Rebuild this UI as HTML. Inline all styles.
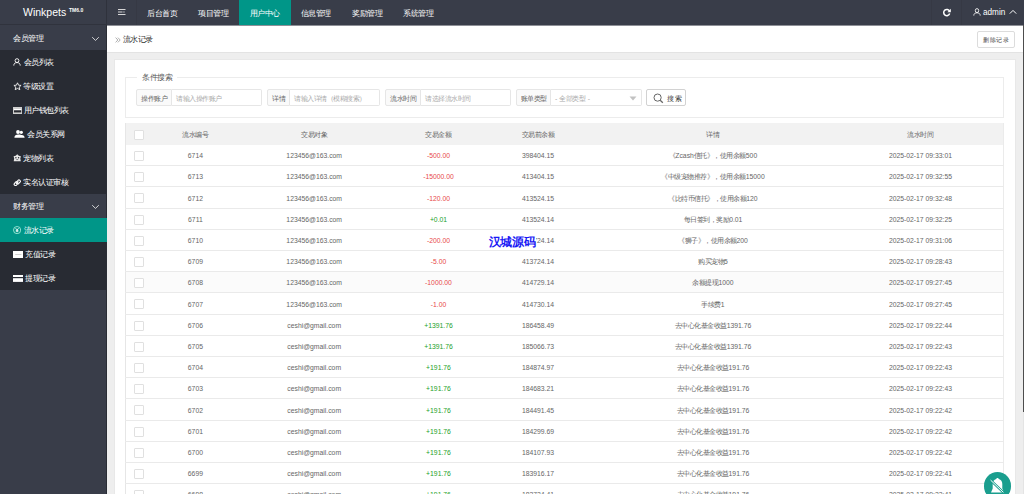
<!DOCTYPE html><html><head><meta charset="utf-8"><style>
*{margin:0;padding:0;box-sizing:border-box}
html,body{width:1024px;height:494px;overflow:hidden;background:#eeeeee;font-family:"Liberation Sans",sans-serif}
.a{position:absolute}
.nw{white-space:nowrap}
#hdr{left:0;top:0;width:1024px;height:25px;background:#393D49}
.navt{color:#fff;font-size:8px;line-height:25px;top:0.7px;letter-spacing:-0.5px}
#side{left:0;top:25px;width:106px;height:469px;background:#393D49}
.sub{background:#282B33}
.st{color:#fff;font-size:8px;letter-spacing:-0.5px;line-height:24px;margin-top:1.2px}
.c{}
.tb{font-size:6.8px;color:#666;text-align:center;white-space:nowrap}
.tb .c{font-size:7px;letter-spacing:-0.5px}
.cb{position:absolute;width:10px;height:10px;border:1px solid #e0e0e0;background:#fff;border-radius:1px}
.lbl{position:absolute;height:17px;background:#fafafa;border:1px solid #e6e6e6;border-radius:2px 0 0 2px;font-size:7px;line-height:18px;color:#666;text-align:center;letter-spacing:-0.5px}
.inp{position:absolute;height:17px;background:#fff;border:1px solid #e6e6e6;border-left:none;border-radius:0 2px 2px 0;font-size:7px;line-height:18px;color:#aaa;letter-spacing:-0.5px;white-space:nowrap}
.hl{position:absolute;height:1px;background:#eaeaea}
</style></head><body>
<div class="a" id="hdr">
<div class="a nw" style="left:23px;top:2px;font-size:10.5px;line-height:21px;color:#fff">Winkpets</div>
<div class="a nw" style="left:69px;top:6px;font-size:5px;line-height:8px;color:#fff;font-weight:bold">TM6.0</div>
<div class="a" style="left:106px;top:0;width:1px;height:25px;background:#2f323c"></div>
<div class="a" style="left:136px;top:0;width:1px;height:25px;background:#363944"></div>
<svg class="a" style="left:117px;top:8px" width="10" height="9" viewBox="0 0 10 9"><path d="M1 1.5H8.5M1 4H5.5M1 6.5H8.5" stroke="#e8e8e8" stroke-width="0.9"/><path d="M6.6 3L7.9 4L6.6 5Z" fill="#ddd"/></svg>
<div class="a" style="left:239px;top:0;width:52px;height:25px;background:#009688"></div>
<div class="a nw navt" style="left:147px">后台首页</div>
<div class="a nw navt" style="left:198px">项目管理</div>
<div class="a nw navt" style="left:249.8px">用户中心</div>
<div class="a nw navt" style="left:300.9px">信息管理</div>
<div class="a nw navt" style="left:352px">奖励管理</div>
<div class="a nw navt" style="left:403px">系统管理</div>
<div class="a" style="left:931px;top:0;width:1px;height:25px;background:#363944"></div>
<div class="a" style="left:961px;top:0;width:1px;height:25px;background:#363944"></div>
<svg class="a" style="left:942px;top:7.6px" width="10" height="9" viewBox="0 0 10 9"><path d="M7.6 3.2A3.1 3.1 0 1 0 7.7 5.6" stroke="#fff" stroke-width="1.5" fill="none"/><path d="M8.8 0.8V4.2H5.4Z" fill="#fff"/></svg>
<svg class="a" style="left:972.5px;top:8.3px" width="8" height="8" viewBox="0 0 8 8"><ellipse cx="4" cy="2.6" rx="1.7" ry="2" stroke="#fff" stroke-width="0.85" fill="none"/><path d="M0.8 7.6C0.8 5.6 2.2 4.8 4 4.8S7.2 5.6 7.2 7.6" stroke="#fff" stroke-width="0.85" fill="none"/></svg>
<div class="a nw" style="left:983px;top:0.7px;font-size:8.2px;line-height:24px;color:#fff">admin</div>
<svg class="a" style="left:1009px;top:9px" width="8" height="6" viewBox="0 0 8 6"><path d="M0.8 4.6L4 1.4L7.2 4.6" stroke="#fff" stroke-width="1" fill="none"/></svg>
</div>
<div class="a" id="side">
<div class="a nw st" style="left:13px;top:0.5px">会员管理</div>
<svg class="a" style="left:91px;top:10.5px" width="9" height="6" viewBox="0 0 9 6"><path d="M1.2 1.2L4.5 4.4L7.8 1.2" stroke="#eee" stroke-width="0.85" fill="none"/></svg>
<div class="a sub" style="left:0;top:24.5px;width:106px;height:144px"></div>
<div class="a nw st" style="left:23.5px;top:24.5px">会员列表</div>
<div class="a nw st" style="left:23.1px;top:48.5px">等级设置</div>
<div class="a nw st" style="left:23.8px;top:72.5px">用户钱包列表</div>
<div class="a nw st" style="left:27px;top:96.5px">会员关系网</div>
<div class="a nw st" style="left:23.3px;top:120.5px">宠物列表</div>
<div class="a nw st" style="left:23.3px;top:144.5px">实名认证审核</div>
<div class="a nw st" style="left:13px;top:169px">财务管理</div>
<svg class="a" style="left:91px;top:179px" width="9" height="6" viewBox="0 0 9 6"><path d="M1.2 1.2L4.5 4.4L7.8 1.2" stroke="#eee" stroke-width="0.85" fill="none"/></svg>
<div class="a sub" style="left:0;top:193px;width:106px;height:72px"></div>
<div class="a" style="left:0;top:193px;width:107px;height:24px;background:#009688"></div>
<div class="a nw st" style="left:23.6px;top:193px">流水记录</div>
<div class="a nw st" style="left:25.2px;top:217px">充值记录</div>
<div class="a nw st" style="left:25.2px;top:241px">提现记录</div>
</div>
<svg class="a" style="left:13px;top:58px" width="8" height="8" viewBox="0 0 8 8"><circle cx="4" cy="2.6" r="1.9" stroke="#fff" stroke-width="0.9" fill="none"/><path d="M0.8 7.6C0.8 5.3 2.2 4.6 4 4.6S7.2 5.3 7.2 7.6" stroke="#fff" stroke-width="0.9" fill="none"/></svg>
<svg class="a" style="left:12.5px;top:81.7px" width="9" height="9" viewBox="0 0 9 9"><path d="M4.5 0.8L5.6 3.2L8.1 3.4L6.2 5.1L6.8 7.7L4.5 6.4L2.2 7.7L2.8 5.1L0.9 3.4L3.4 3.2Z" stroke="#fff" stroke-width="0.85" fill="none" stroke-linejoin="round"/></svg>
<svg class="a" style="left:12.9px;top:106.5px" width="9.2" height="7" viewBox="0 0 9.2 7"><rect x="0" y="0" width="9.2" height="7" fill="#cfcfcf"/><rect x="1" y="2" width="7.2" height="1.3" fill="#fff"/><rect x="1" y="3.3" width="7.2" height="1.7" fill="#2a2c33"/><rect x="1" y="5" width="7.2" height="1" fill="#888"/></svg>
<svg class="a" style="left:13.5px;top:130px" width="11" height="8" viewBox="0 0 11 8"><circle cx="4" cy="2" r="1.9" fill="#fff"/><circle cx="7.3" cy="2.3" r="1.6" fill="#fff"/><path d="M0.4 7.8C0.4 5.4 2 4.4 4.2 4.4S7.4 5 7.6 5 10.6 5 10.6 7.8Z" fill="#fff"/></svg>
<svg class="a" style="left:13.3px;top:154.3px" width="8.5" height="7.5" viewBox="0 0 8.5 7.5"><path d="M4.25 0.3L5.8 1.8L7.9 2.3L7.3 4.4L7.8 7.2H0.7L1.2 4.4L0.6 2.3L2.7 1.8Z" fill="#e6e6e6"/><circle cx="2.9" cy="3.7" r="0.7" fill="#282B33"/><circle cx="5.6" cy="3.7" r="0.7" fill="#282B33"/><path d="M3.3 5.6H5.2" stroke="#282B33" stroke-width="0.6"/></svg>
<svg class="a" style="left:13px;top:178.6px" width="8.5" height="7.5" viewBox="0 0 8.5 7.5"><path d="M3.6 2.8L5 1.4A1.3 1.3 0 0 1 7 3.2L5.4 4.8M4.9 4.7L3.5 6.1A1.3 1.3 0 0 1 1.5 4.3L3.1 2.7M3.3 4.5L5.2 2.8" stroke="#fff" stroke-width="1.1" fill="none" stroke-linecap="round"/></svg>
<svg class="a" style="left:13px;top:225.9px" width="8.2" height="8.2" viewBox="0 0 8.2 8.2"><circle cx="4.1" cy="4.1" r="3.6" stroke="#cfe" stroke-width="0.7" fill="none"/><path d="M2.6 2.2L4.1 4L5.6 2.2M4.1 4V6.2M2.8 4.3H5.4M2.8 5.2H5.4" stroke="#fff" stroke-width="0.8" fill="none"/></svg>
<svg class="a" style="left:12.8px;top:250.9px" width="10.6" height="7" viewBox="0 0 10.6 7"><rect x="0" y="0" width="10.6" height="7" fill="#fff"/><rect x="2.2" y="3.1" width="6.2" height="0.8" fill="#c4c4c4"/></svg>
<svg class="a" style="left:12.8px;top:274.8px" width="10.6" height="7" viewBox="0 0 10.6 7"><rect x="0" y="0" width="10.6" height="2" fill="#fff"/><rect x="0" y="3.2" width="10.6" height="3.7" fill="#fff"/></svg>
<div class="a" style="left:106px;top:25px;width:1px;height:193px;background:#2a2d35"></div>
<div class="a" style="left:106px;top:242px;width:1px;height:252px;background:#2a2d35"></div>
<div class="a" style="left:0;top:24px;width:106px;height:1px;background:#30333d"></div>
<div class="a" style="left:107px;top:25px;width:916px;height:27px;background:#fff"></div>
<div class="a" style="left:107px;top:25px;width:916px;height:1px;background:#8e9097"></div>
<div class="a" style="left:107px;top:52px;width:916px;height:1px;background:#e3e3e3"></div>
<svg class="a" style="left:114.5px;top:36.5px" width="6" height="6" viewBox="0 0 6 6"><path d="M0.6 0.6L2.9 3L0.6 5.4M2.9 0.6L5.2 3L2.9 5.4" stroke="#999" stroke-width="0.8" fill="none"/></svg>
<div class="a nw" style="left:122.8px;top:27px;font-size:8px;letter-spacing:-0.5px;line-height:25px;color:#333">流水记录</div>
<div class="a" style="left:977px;top:31px;width:38px;height:17px;border:1px solid #dcdcdc;border-radius:2px;background:#fff;font-size:6px;letter-spacing:0.5px;line-height:16px;color:#444;text-align:center">删除记录</div>
<div class="a" style="left:1023px;top:25px;width:1px;height:387px;background:#4d4d4d"></div>
<div class="a" style="left:1023px;top:412px;width:1px;height:82px;background:#e4e4e4"></div>
<div class="a" style="left:115px;top:60px;width:900px;height:440px;background:#fff;box-shadow:0 0 0 1px #e8e8e8"></div>
<div class="a" style="left:125px;top:77px;width:879px;height:41px;border:1px solid #ececec;border-top:none"></div>
<div class="hl" style="left:125px;top:77px;width:12px;background:#ececec"></div>
<div class="hl" style="left:177px;top:77px;width:827px;background:#ececec"></div>
<div class="a nw" style="left:142px;top:69px;font-size:8px;letter-spacing:-0.5px;line-height:17px;color:#555">条件搜索</div>
<div class="lbl nw" style="left:136px;top:89px;width:36px">操作账户</div>
<div class="inp" style="left:172px;top:89px;width:90px;padding-left:4px;word-spacing:1px">请输入操作账户</div>
<div class="lbl nw" style="left:267px;top:89px;width:23px">详情</div>
<div class="inp" style="left:290px;top:89px;width:90px;padding-left:4px;word-spacing:1px">请输入详情（模糊搜索）</div>
<div class="lbl nw" style="left:385px;top:89px;width:36px">流水时间</div>
<div class="inp" style="left:421px;top:89px;width:90px;padding-left:4px;word-spacing:1px">请选择流水时间</div>
<div class="lbl nw" style="left:516px;top:89px;width:35px">账单类型</div>
<div class="inp" style="left:551px;top:89px;width:91px;padding-left:4px;word-spacing:1px">- 全部类型 -</div>
<svg class="a" style="left:629px;top:95.5px" width="8" height="5" viewBox="0 0 8 5"><path d="M0.5 0.5H7.5L4 4.5Z" fill="#c2c2c2"/></svg>
<div class="a" style="left:646px;top:89px;width:40px;height:17px;border:1px solid #d2d2d2;border-radius:2px;background:#fff"></div>
<svg class="a" style="left:653px;top:92.5px" width="11" height="11" viewBox="0 0 11 11"><circle cx="4.6" cy="4.6" r="3.6" stroke="#666" stroke-width="1" fill="none"/><path d="M7.2 7.2L9.8 9.8" stroke="#666" stroke-width="1.3"/></svg>
<div class="a nw" style="left:666.5px;top:89.5px;font-size:7px;letter-spacing:1.5px;line-height:18px;color:#333">搜索</div>
<div class="a" style="left:125px;top:123px;width:879px;height:22px;background:#f2f2f2"></div>
<div class="a" style="left:125px;top:123px;width:1px;height:371px;background:#e6e6e6"></div>
<div class="a" style="left:1003px;top:123px;width:1px;height:371px;background:#ebebeb"></div>
<div class="cb" style="left:134.3px;top:130px"></div>
<div class="a tb" style="left:152.5px;top:123.80px;width:85.8px;height:21.4px;line-height:21.4px;"><span class="c">流水编号</span></div>
<div class="a tb" style="left:238.3px;top:123.80px;width:151.8px;height:21.4px;line-height:21.4px;"><span class="c">交易对象</span></div>
<div class="a tb" style="left:390.1px;top:123.80px;width:96.8px;height:21.4px;line-height:21.4px;"><span class="c">交易金额</span></div>
<div class="a tb" style="left:486.9px;top:123.80px;width:102.2px;height:21.4px;line-height:21.4px;"><span class="c">交易前余额</span></div>
<div class="a tb" style="left:589.1px;top:123.80px;width:247.8px;height:21.4px;line-height:21.4px;"><span class="c">详情</span></div>
<div class="a tb" style="left:836.9px;top:123.80px;width:167.1px;height:21.4px;line-height:21.4px;"><span class="c">流水时间</span></div>
<div class="hl" style="left:125px;top:165.10px;width:879px"></div>
<div class="cb" style="left:134.3px;top:151.00px"></div>
<div class="a tb" style="left:152.5px;top:145.20px;width:85.8px;height:21.2px;line-height:21.2px;">6714</div>
<div class="a tb" style="left:238.3px;top:145.20px;width:151.8px;height:21.2px;line-height:21.2px;">123456@163.com</div>
<div class="a tb" style="left:390.1px;top:145.20px;width:96.8px;height:21.2px;line-height:21.2px;color:#e84a4a">-500.00</div>
<div class="a tb" style="left:486.9px;top:145.20px;width:102.2px;height:21.2px;line-height:21.2px;">398404.15</div>
<div class="a tb" style="left:589.1px;top:145.20px;width:247.8px;height:21.2px;line-height:21.2px;"><span class="c">《</span>Zcash<span class="c">信托》，使用余额</span>500</div>
<div class="a tb" style="left:836.9px;top:145.20px;width:167.1px;height:21.2px;line-height:21.2px;">2025-02-17 09:33:01</div>
<div class="hl" style="left:125px;top:186.30px;width:879px"></div>
<div class="cb" style="left:134.3px;top:172.20px"></div>
<div class="a tb" style="left:152.5px;top:166.40px;width:85.8px;height:21.2px;line-height:21.2px;">6713</div>
<div class="a tb" style="left:238.3px;top:166.40px;width:151.8px;height:21.2px;line-height:21.2px;">123456@163.com</div>
<div class="a tb" style="left:390.1px;top:166.40px;width:96.8px;height:21.2px;line-height:21.2px;color:#e84a4a">-15000.00</div>
<div class="a tb" style="left:486.9px;top:166.40px;width:102.2px;height:21.2px;line-height:21.2px;">413404.15</div>
<div class="a tb" style="left:589.1px;top:166.40px;width:247.8px;height:21.2px;line-height:21.2px;"><span class="c">《中级宠物推荐》，使用余额</span>15000</div>
<div class="a tb" style="left:836.9px;top:166.40px;width:167.1px;height:21.2px;line-height:21.2px;">2025-02-17 09:32:55</div>
<div class="hl" style="left:125px;top:207.50px;width:879px"></div>
<div class="cb" style="left:134.3px;top:193.40px"></div>
<div class="a tb" style="left:152.5px;top:187.60px;width:85.8px;height:21.2px;line-height:21.2px;">6712</div>
<div class="a tb" style="left:238.3px;top:187.60px;width:151.8px;height:21.2px;line-height:21.2px;">123456@163.com</div>
<div class="a tb" style="left:390.1px;top:187.60px;width:96.8px;height:21.2px;line-height:21.2px;color:#e84a4a">-120.00</div>
<div class="a tb" style="left:486.9px;top:187.60px;width:102.2px;height:21.2px;line-height:21.2px;">413524.15</div>
<div class="a tb" style="left:589.1px;top:187.60px;width:247.8px;height:21.2px;line-height:21.2px;"><span class="c">《比特币信托》，使用余额</span>120</div>
<div class="a tb" style="left:836.9px;top:187.60px;width:167.1px;height:21.2px;line-height:21.2px;">2025-02-17 09:32:48</div>
<div class="hl" style="left:125px;top:228.70px;width:879px"></div>
<div class="cb" style="left:134.3px;top:214.60px"></div>
<div class="a tb" style="left:152.5px;top:208.80px;width:85.8px;height:21.2px;line-height:21.2px;">6711</div>
<div class="a tb" style="left:238.3px;top:208.80px;width:151.8px;height:21.2px;line-height:21.2px;">123456@163.com</div>
<div class="a tb" style="left:390.1px;top:208.80px;width:96.8px;height:21.2px;line-height:21.2px;color:#22a12a">+0.01</div>
<div class="a tb" style="left:486.9px;top:208.80px;width:102.2px;height:21.2px;line-height:21.2px;">413524.14</div>
<div class="a tb" style="left:589.1px;top:208.80px;width:247.8px;height:21.2px;line-height:21.2px;"><span class="c">每日签到，奖励</span>0.01</div>
<div class="a tb" style="left:836.9px;top:208.80px;width:167.1px;height:21.2px;line-height:21.2px;">2025-02-17 09:32:25</div>
<div class="hl" style="left:125px;top:249.90px;width:879px"></div>
<div class="cb" style="left:134.3px;top:235.80px"></div>
<div class="a tb" style="left:152.5px;top:230.00px;width:85.8px;height:21.2px;line-height:21.2px;">6710</div>
<div class="a tb" style="left:238.3px;top:230.00px;width:151.8px;height:21.2px;line-height:21.2px;">123456@163.com</div>
<div class="a tb" style="left:390.1px;top:230.00px;width:96.8px;height:21.2px;line-height:21.2px;color:#e84a4a">-200.00</div>
<div class="a tb" style="left:486.9px;top:230.00px;width:102.2px;height:21.2px;line-height:21.2px;">413724.14</div>
<div class="a tb" style="left:589.1px;top:230.00px;width:247.8px;height:21.2px;line-height:21.2px;"><span class="c">《狮子》，使用余额</span>200</div>
<div class="a tb" style="left:836.9px;top:230.00px;width:167.1px;height:21.2px;line-height:21.2px;">2025-02-17 09:31:06</div>
<div class="hl" style="left:125px;top:271.10px;width:879px"></div>
<div class="cb" style="left:134.3px;top:257.00px"></div>
<div class="a tb" style="left:152.5px;top:251.20px;width:85.8px;height:21.2px;line-height:21.2px;">6709</div>
<div class="a tb" style="left:238.3px;top:251.20px;width:151.8px;height:21.2px;line-height:21.2px;">123456@163.com</div>
<div class="a tb" style="left:390.1px;top:251.20px;width:96.8px;height:21.2px;line-height:21.2px;color:#e84a4a">-5.00</div>
<div class="a tb" style="left:486.9px;top:251.20px;width:102.2px;height:21.2px;line-height:21.2px;">413724.14</div>
<div class="a tb" style="left:589.1px;top:251.20px;width:247.8px;height:21.2px;line-height:21.2px;"><span class="c">购买宠物</span>5</div>
<div class="a tb" style="left:836.9px;top:251.20px;width:167.1px;height:21.2px;line-height:21.2px;">2025-02-17 09:28:43</div>
<div class="a" style="left:126px;top:271.6px;width:877px;height:21.2px;background:#fbfbfb"></div>
<div class="hl" style="left:125px;top:292.30px;width:879px"></div>
<div class="cb" style="left:134.3px;top:278.20px"></div>
<div class="a tb" style="left:152.5px;top:272.40px;width:85.8px;height:21.2px;line-height:21.2px;">6708</div>
<div class="a tb" style="left:238.3px;top:272.40px;width:151.8px;height:21.2px;line-height:21.2px;">123456@163.com</div>
<div class="a tb" style="left:390.1px;top:272.40px;width:96.8px;height:21.2px;line-height:21.2px;color:#e84a4a">-1000.00</div>
<div class="a tb" style="left:486.9px;top:272.40px;width:102.2px;height:21.2px;line-height:21.2px;">414729.14</div>
<div class="a tb" style="left:589.1px;top:272.40px;width:247.8px;height:21.2px;line-height:21.2px;"><span class="c">余额提现</span>1000</div>
<div class="a tb" style="left:836.9px;top:272.40px;width:167.1px;height:21.2px;line-height:21.2px;">2025-02-17 09:27:45</div>
<div class="hl" style="left:125px;top:313.50px;width:879px"></div>
<div class="cb" style="left:134.3px;top:299.40px"></div>
<div class="a tb" style="left:152.5px;top:293.60px;width:85.8px;height:21.2px;line-height:21.2px;">6707</div>
<div class="a tb" style="left:238.3px;top:293.60px;width:151.8px;height:21.2px;line-height:21.2px;">123456@163.com</div>
<div class="a tb" style="left:390.1px;top:293.60px;width:96.8px;height:21.2px;line-height:21.2px;color:#e84a4a">-1.00</div>
<div class="a tb" style="left:486.9px;top:293.60px;width:102.2px;height:21.2px;line-height:21.2px;">414730.14</div>
<div class="a tb" style="left:589.1px;top:293.60px;width:247.8px;height:21.2px;line-height:21.2px;"><span class="c">手续费</span>1</div>
<div class="a tb" style="left:836.9px;top:293.60px;width:167.1px;height:21.2px;line-height:21.2px;">2025-02-17 09:27:45</div>
<div class="hl" style="left:125px;top:334.70px;width:879px"></div>
<div class="cb" style="left:134.3px;top:320.60px"></div>
<div class="a tb" style="left:152.5px;top:314.80px;width:85.8px;height:21.2px;line-height:21.2px;">6706</div>
<div class="a tb" style="left:238.3px;top:314.80px;width:151.8px;height:21.2px;line-height:21.2px;">ceshi@gmail.com</div>
<div class="a tb" style="left:390.1px;top:314.80px;width:96.8px;height:21.2px;line-height:21.2px;color:#22a12a">+1391.76</div>
<div class="a tb" style="left:486.9px;top:314.80px;width:102.2px;height:21.2px;line-height:21.2px;">186458.49</div>
<div class="a tb" style="left:589.1px;top:314.80px;width:247.8px;height:21.2px;line-height:21.2px;"><span class="c">去中心化基金收益</span>1391.76</div>
<div class="a tb" style="left:836.9px;top:314.80px;width:167.1px;height:21.2px;line-height:21.2px;">2025-02-17 09:22:44</div>
<div class="hl" style="left:125px;top:355.90px;width:879px"></div>
<div class="cb" style="left:134.3px;top:341.80px"></div>
<div class="a tb" style="left:152.5px;top:336.00px;width:85.8px;height:21.2px;line-height:21.2px;">6705</div>
<div class="a tb" style="left:238.3px;top:336.00px;width:151.8px;height:21.2px;line-height:21.2px;">ceshi@gmail.com</div>
<div class="a tb" style="left:390.1px;top:336.00px;width:96.8px;height:21.2px;line-height:21.2px;color:#22a12a">+1391.76</div>
<div class="a tb" style="left:486.9px;top:336.00px;width:102.2px;height:21.2px;line-height:21.2px;">185066.73</div>
<div class="a tb" style="left:589.1px;top:336.00px;width:247.8px;height:21.2px;line-height:21.2px;"><span class="c">去中心化基金收益</span>1391.76</div>
<div class="a tb" style="left:836.9px;top:336.00px;width:167.1px;height:21.2px;line-height:21.2px;">2025-02-17 09:22:43</div>
<div class="hl" style="left:125px;top:377.10px;width:879px"></div>
<div class="cb" style="left:134.3px;top:363.00px"></div>
<div class="a tb" style="left:152.5px;top:357.20px;width:85.8px;height:21.2px;line-height:21.2px;">6704</div>
<div class="a tb" style="left:238.3px;top:357.20px;width:151.8px;height:21.2px;line-height:21.2px;">ceshi@gmail.com</div>
<div class="a tb" style="left:390.1px;top:357.20px;width:96.8px;height:21.2px;line-height:21.2px;color:#22a12a">+191.76</div>
<div class="a tb" style="left:486.9px;top:357.20px;width:102.2px;height:21.2px;line-height:21.2px;">184874.97</div>
<div class="a tb" style="left:589.1px;top:357.20px;width:247.8px;height:21.2px;line-height:21.2px;"><span class="c">去中心化基金收益</span>191.76</div>
<div class="a tb" style="left:836.9px;top:357.20px;width:167.1px;height:21.2px;line-height:21.2px;">2025-02-17 09:22:43</div>
<div class="hl" style="left:125px;top:398.30px;width:879px"></div>
<div class="cb" style="left:134.3px;top:384.20px"></div>
<div class="a tb" style="left:152.5px;top:378.40px;width:85.8px;height:21.2px;line-height:21.2px;">6703</div>
<div class="a tb" style="left:238.3px;top:378.40px;width:151.8px;height:21.2px;line-height:21.2px;">ceshi@gmail.com</div>
<div class="a tb" style="left:390.1px;top:378.40px;width:96.8px;height:21.2px;line-height:21.2px;color:#22a12a">+191.76</div>
<div class="a tb" style="left:486.9px;top:378.40px;width:102.2px;height:21.2px;line-height:21.2px;">184683.21</div>
<div class="a tb" style="left:589.1px;top:378.40px;width:247.8px;height:21.2px;line-height:21.2px;"><span class="c">去中心化基金收益</span>191.76</div>
<div class="a tb" style="left:836.9px;top:378.40px;width:167.1px;height:21.2px;line-height:21.2px;">2025-02-17 09:22:43</div>
<div class="hl" style="left:125px;top:419.50px;width:879px"></div>
<div class="cb" style="left:134.3px;top:405.40px"></div>
<div class="a tb" style="left:152.5px;top:399.60px;width:85.8px;height:21.2px;line-height:21.2px;">6702</div>
<div class="a tb" style="left:238.3px;top:399.60px;width:151.8px;height:21.2px;line-height:21.2px;">ceshi@gmail.com</div>
<div class="a tb" style="left:390.1px;top:399.60px;width:96.8px;height:21.2px;line-height:21.2px;color:#22a12a">+191.76</div>
<div class="a tb" style="left:486.9px;top:399.60px;width:102.2px;height:21.2px;line-height:21.2px;">184491.45</div>
<div class="a tb" style="left:589.1px;top:399.60px;width:247.8px;height:21.2px;line-height:21.2px;"><span class="c">去中心化基金收益</span>191.76</div>
<div class="a tb" style="left:836.9px;top:399.60px;width:167.1px;height:21.2px;line-height:21.2px;">2025-02-17 09:22:42</div>
<div class="hl" style="left:125px;top:440.70px;width:879px"></div>
<div class="cb" style="left:134.3px;top:426.60px"></div>
<div class="a tb" style="left:152.5px;top:420.80px;width:85.8px;height:21.2px;line-height:21.2px;">6701</div>
<div class="a tb" style="left:238.3px;top:420.80px;width:151.8px;height:21.2px;line-height:21.2px;">ceshi@gmail.com</div>
<div class="a tb" style="left:390.1px;top:420.80px;width:96.8px;height:21.2px;line-height:21.2px;color:#22a12a">+191.76</div>
<div class="a tb" style="left:486.9px;top:420.80px;width:102.2px;height:21.2px;line-height:21.2px;">184299.69</div>
<div class="a tb" style="left:589.1px;top:420.80px;width:247.8px;height:21.2px;line-height:21.2px;"><span class="c">去中心化基金收益</span>191.76</div>
<div class="a tb" style="left:836.9px;top:420.80px;width:167.1px;height:21.2px;line-height:21.2px;">2025-02-17 09:22:42</div>
<div class="hl" style="left:125px;top:461.90px;width:879px"></div>
<div class="cb" style="left:134.3px;top:447.80px"></div>
<div class="a tb" style="left:152.5px;top:442.00px;width:85.8px;height:21.2px;line-height:21.2px;">6700</div>
<div class="a tb" style="left:238.3px;top:442.00px;width:151.8px;height:21.2px;line-height:21.2px;">ceshi@gmail.com</div>
<div class="a tb" style="left:390.1px;top:442.00px;width:96.8px;height:21.2px;line-height:21.2px;color:#22a12a">+191.76</div>
<div class="a tb" style="left:486.9px;top:442.00px;width:102.2px;height:21.2px;line-height:21.2px;">184107.93</div>
<div class="a tb" style="left:589.1px;top:442.00px;width:247.8px;height:21.2px;line-height:21.2px;"><span class="c">去中心化基金收益</span>191.76</div>
<div class="a tb" style="left:836.9px;top:442.00px;width:167.1px;height:21.2px;line-height:21.2px;">2025-02-17 09:22:42</div>
<div class="hl" style="left:125px;top:483.10px;width:879px"></div>
<div class="cb" style="left:134.3px;top:469.00px"></div>
<div class="a tb" style="left:152.5px;top:463.20px;width:85.8px;height:21.2px;line-height:21.2px;">6699</div>
<div class="a tb" style="left:238.3px;top:463.20px;width:151.8px;height:21.2px;line-height:21.2px;">ceshi@gmail.com</div>
<div class="a tb" style="left:390.1px;top:463.20px;width:96.8px;height:21.2px;line-height:21.2px;color:#22a12a">+191.76</div>
<div class="a tb" style="left:486.9px;top:463.20px;width:102.2px;height:21.2px;line-height:21.2px;">183916.17</div>
<div class="a tb" style="left:589.1px;top:463.20px;width:247.8px;height:21.2px;line-height:21.2px;"><span class="c">去中心化基金收益</span>191.76</div>
<div class="a tb" style="left:836.9px;top:463.20px;width:167.1px;height:21.2px;line-height:21.2px;">2025-02-17 09:22:41</div>
<div class="hl" style="left:125px;top:504.30px;width:879px"></div>
<div class="cb" style="left:134.3px;top:490.20px"></div>
<div class="a tb" style="left:152.5px;top:484.40px;width:85.8px;height:21.2px;line-height:21.2px;">6698</div>
<div class="a tb" style="left:238.3px;top:484.40px;width:151.8px;height:21.2px;line-height:21.2px;">ceshi@gmail.com</div>
<div class="a tb" style="left:390.1px;top:484.40px;width:96.8px;height:21.2px;line-height:21.2px;color:#22a12a">+191.76</div>
<div class="a tb" style="left:486.9px;top:484.40px;width:102.2px;height:21.2px;line-height:21.2px;">183724.41</div>
<div class="a tb" style="left:589.1px;top:484.40px;width:247.8px;height:21.2px;line-height:21.2px;"><span class="c">去中心化基金收益</span>191.76</div>
<div class="a tb" style="left:836.9px;top:484.40px;width:167.1px;height:21.2px;line-height:21.2px;">2025-02-17 09:22:41</div>
<div class="a nw" style="left:487.5px;top:233.5px;height:16px;padding:0 1px;background:#fff;font-size:12px;line-height:16px;font-weight:900;color:#1a1af5;letter-spacing:-0.3px">汉城源码</div>
<div class="a" style="left:983.5px;top:472px;width:27.6px;height:27.6px;border-radius:50%;background:#1a9e8e"></div>
<svg class="a" style="left:989px;top:477px" width="17" height="17" viewBox="0 0 17 17"><path d="M8.5 1C7.8 1 7.4 1.5 7.2 2C5 2.6 3.7 4.6 3.7 7V11.5L2 15.5H15L13.3 11.5V7C13.3 4.6 12 2.6 9.8 2C9.6 1.5 9.2 1 8.5 1Z" fill="#fff"/><path d="M1.3 2.8L14.6 15.6" stroke="#1a9e8e" stroke-width="2.4"/><path d="M1.6 3.1L14.3 15.3" stroke="#fff" stroke-width="1"/></svg>
</body></html>
